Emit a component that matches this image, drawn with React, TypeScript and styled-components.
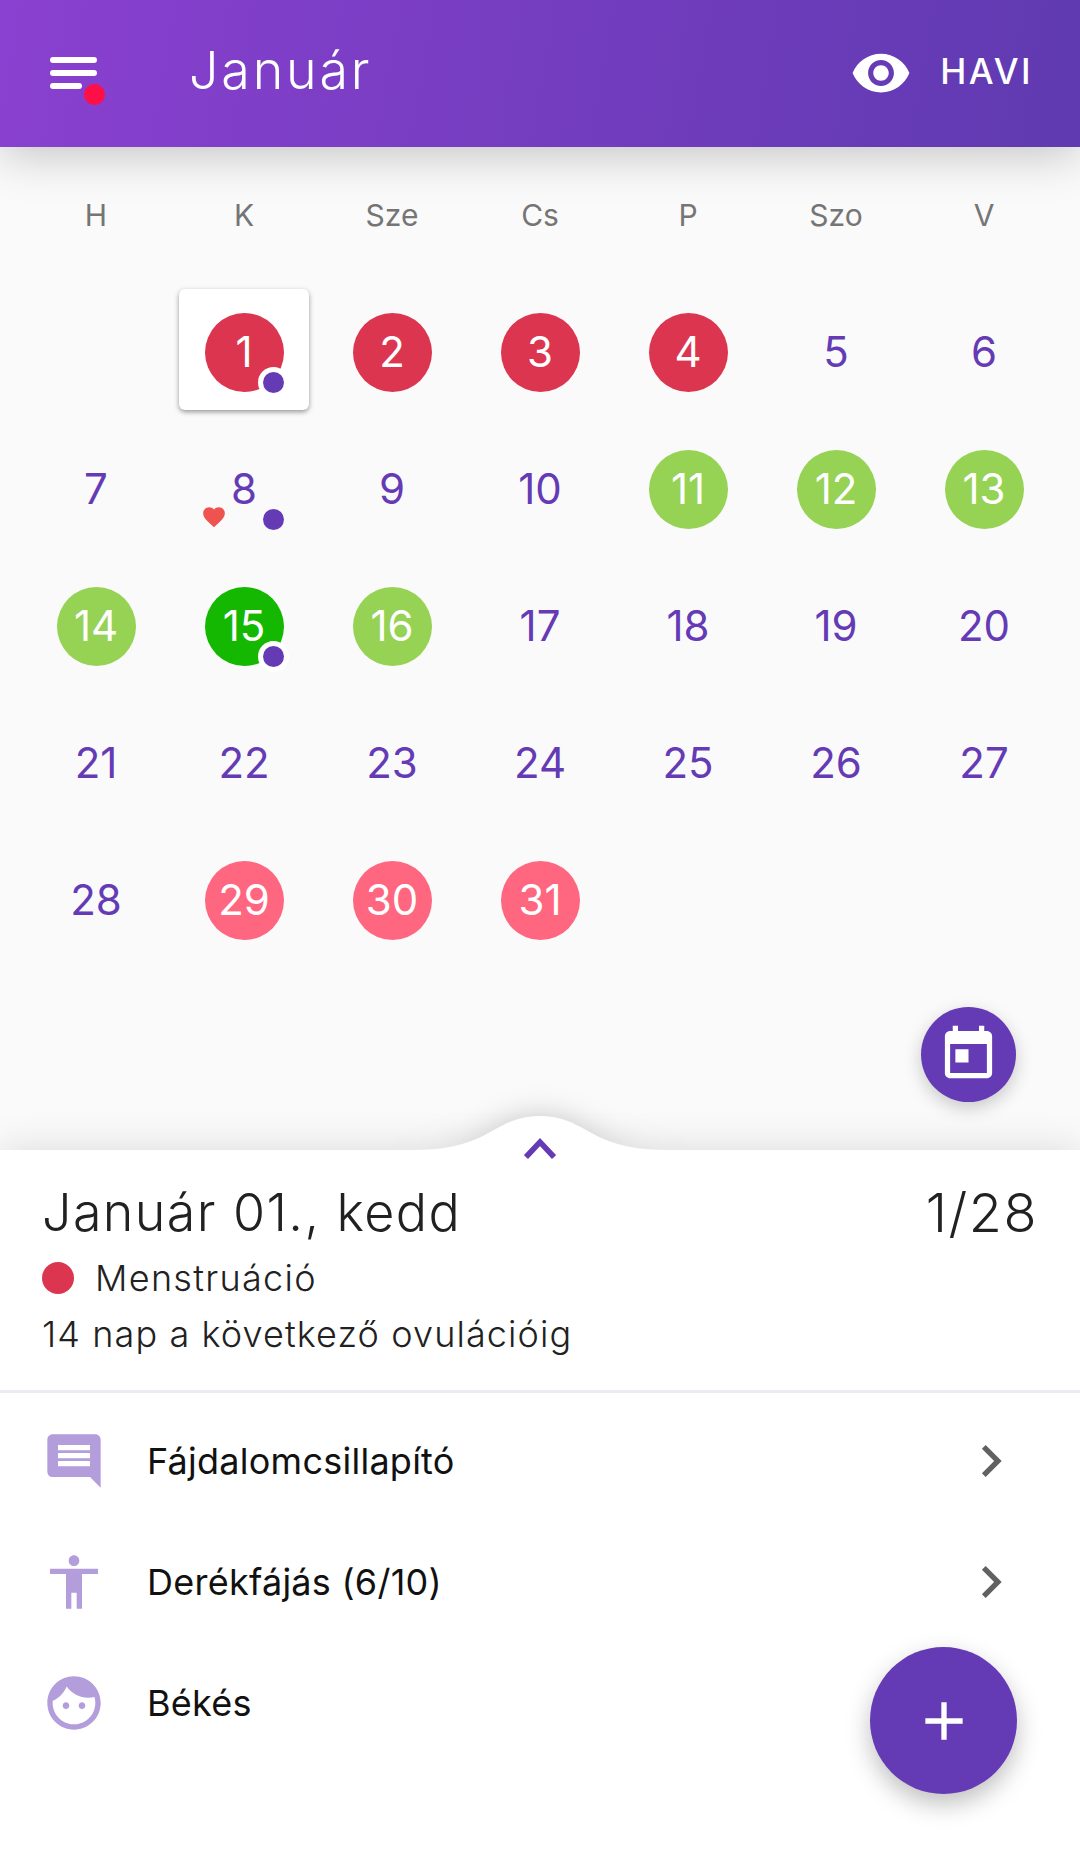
import React from 'react';
import styled, { createGlobalStyle } from 'styled-components';

const PURPLE = '#653bb5';
const FONT = "Inter, Roboto, 'Noto Sans', sans-serif";

const GlobalStyle = createGlobalStyle`
  html, body {
    margin: 0;
    padding: 0;
    background: #fafafa;
    font-family: ${FONT};
  }
`;

const Screen = styled.div`
  position: relative;
  width: 1080px;
  height: 1857px;
  display: flex;
  flex-direction: column;
  overflow: hidden;
  background: #fafafa;
`;

const Header = styled.header`
  position: relative;
  z-index: 2;
  flex: none;
  height: 147px;
  display: flex;
  align-items: center;
  padding: 0 50px 5px;
  box-sizing: border-box;
  background: linear-gradient(100deg, #8a40d0 0%, #5f3ab0 100%);
  box-shadow: 0 8px 44px rgba(0, 0, 0, 0.22);
  color: #fff;
`;

const MenuButton = styled.div`
  position: relative;
  flex: none;
  width: 47px;
  height: 32px;
  display: flex;
  flex-direction: column;
  justify-content: space-between;
  margin-right: 92px;
  margin-top: 4px;
`;

const MenuBar = styled.span<{ $short?: boolean }>`
  display: block;
  height: 6px;
  border-radius: 3px;
  background: #fff;
  width: ${(props) => (props.$short ? '32px' : '47px')};
`;

const MenuDot = styled.span`
  position: absolute;
  left: 34px;
  top: 27px;
  width: 21px;
  height: 21px;
  border-radius: 50%;
  background: #ff0f47;
`;

const Title = styled.h1`
  flex: 1;
  margin: 0;
  font-size: 52px;
  font-weight: 350;
  letter-spacing: 2.8px;
  line-height: 1;
`;

const ViewSwitch = styled.div`
  display: flex;
  align-items: center;
  gap: 28px;
  margin-right: -3px;
`;

const EyeIcon = styled.svg`
  width: 62px;
  height: 62px;
  margin-top: 3px;
  fill: #fff;
`;

const ViewLabel = styled.span`
  font-size: 35px;
  font-weight: 500;
  letter-spacing: 2.5px;
`;

const Weekdays = styled.div`
  flex: none;
  display: grid;
  grid-template-columns: repeat(7, 148px);
  padding: 50px 22px 0;
  height: 117px;
  box-sizing: border-box;
`;

const Weekday = styled.div`
  text-align: center;
  color: #757575;
  font-size: 30px;
  line-height: 36px;
`;

const Days = styled.div`
  flex: none;
  display: grid;
  grid-template-columns: repeat(7, 148px);
  grid-auto-rows: 137px;
  align-content: start;
  padding: 20px 22px 0;
  height: 886px;
  box-sizing: border-box;
`;

const DayCell = styled.div<{ $column?: number }>`
  position: relative;
  display: flex;
  align-items: center;
  justify-content: center;
  grid-column: ${(props) => props.$column || 'auto'};
`;

const SelectedCard = styled.span`
  position: absolute;
  left: 9px;
  top: 5px;
  width: 130px;
  height: 121px;
  border-radius: 6px;
  background: #fff;
  box-shadow: 0 2px 5px rgba(0, 0, 0, 0.4);
`;

const DayNumber = styled.span<{ $bg?: string }>`
  position: relative;
  width: 79px;
  height: 79px;
  padding-bottom: 2px;
  box-sizing: border-box;
  display: flex;
  align-items: center;
  justify-content: center;
  border-radius: 50%;
  font-size: 42px;
  font-weight: 400;
  background: ${(props) => props.$bg || 'transparent'};
  color: ${(props) => (props.$bg ? '#fff' : PURPLE)};
`;

const NoteDot = styled.span<{ $ring?: boolean }>`
  position: absolute;
  left: 93px;
  top: 87.5px;
  width: 21px;
  height: 21px;
  border-radius: 50%;
  background: ${PURPLE};
  box-shadow: ${(props) => (props.$ring ? '0 0 0 5px #fff' : 'none')};
`;

const HeartMark = styled.svg`
  position: absolute;
  left: 31px;
  top: 83px;
  width: 26px;
  height: 26px;
  fill: #ef5350;
`;

const CalendarFab = styled.div`
  position: absolute;
  z-index: 3;
  left: 921px;
  top: 1007px;
  width: 95px;
  height: 95px;
  display: flex;
  align-items: center;
  justify-content: center;
  border-radius: 50%;
  background: ${PURPLE};
  box-shadow: 0 6px 18px rgba(0, 0, 0, 0.2);
  svg {
    width: 63px;
    height: 63px;
    fill: #fff;
  }
`;

const Panel = styled.section`
  position: relative;
  flex: 1;
  background: #fff;
  box-shadow: 0 0 38px rgba(0, 0, 0, 0.13);
`;

const Bump = styled.svg`
  position: absolute;
  left: 400px;
  top: -34px;
  width: 280px;
  height: 35px;
  fill: #fff;
  filter: drop-shadow(0 -2px 14px rgba(0, 0, 0, 0.18));
`;

const BumpCover = styled.span`
  position: absolute;
  left: 0;
  right: 0;
  top: 0;
  height: 40px;
  background: #fff;
`;

const Chevron = styled.svg`
  position: absolute;
  left: 524px;
  top: -13px;
  width: 32px;
  height: 22px;
  fill: none;
  stroke: ${PURPLE};
  stroke-width: 5.5;
`;

const Summary = styled.div`
  position: relative;
  display: flex;
  flex-direction: column;
  height: 243px;
  box-sizing: border-box;
  padding: 32px 42px 0;
  border-bottom: 3px solid #ebebf3;
  color: #212121;
`;

const SummaryTop = styled.div`
  display: flex;
  justify-content: space-between;
  font-size: 52px;
  font-weight: 350;
  letter-spacing: 1.4px;
  line-height: 62px;
`;

const Fraction = styled.span`
  font-size: 54px;
  letter-spacing: 1.5px;
`;

const PhaseRow = styled.div`
  display: flex;
  align-items: center;
  gap: 21px;
  font-size: 36px;
  font-weight: 350;
  letter-spacing: 1.3px;
  line-height: 52px;
  margin-top: 8px;
`;

const PhaseDot = styled.span`
  width: 32px;
  height: 32px;
  border-radius: 50%;
  background: #dc3550;
`;

const SummaryNote = styled.div`
  font-size: 36px;
  font-weight: 350;
  letter-spacing: 1.1px;
  line-height: 52px;
  margin-top: 4px;
`;

const EntryList = styled.div`
  padding-top: 7px;
`;

const EntryRow = styled.div`
  display: flex;
  align-items: center;
  height: 121px;
  padding-left: 42px;
  padding-right: 57px;
  color: #111;
  font-size: 36px;
  font-weight: 380;
  letter-spacing: 0.25px;
`;

const EntryIcon = styled.svg`
  flex: none;
  width: 64px;
  height: 64px;
  margin-right: 41px;
  fill: #b39ddb;
`;

const EntryText = styled.span`
  flex: 1;
`;

const EntryArrow = styled.svg`
  flex: none;
  width: 64px;
  height: 64px;
  fill: #616161;
`;

const AddFab = styled.div`
  position: absolute;
  z-index: 3;
  left: 870px;
  top: 1647px;
  width: 147px;
  height: 147px;
  display: flex;
  align-items: center;
  justify-content: center;
  border-radius: 50%;
  background: ${PURPLE};
  box-shadow: 0 10px 24px rgba(0, 0, 0, 0.25);
  svg {
    width: 64px;
    height: 64px;
    fill: #fff;
  }
`;

const RED = '#dc3550';
const GREEN = '#96d254';
const PINK = '#ff6680';

const dayColors: Record<number, string> = {
  1: RED, 2: RED, 3: RED, 4: RED,
  11: GREEN, 12: GREEN, 13: GREEN, 14: GREEN, 15: '#14b800', 16: GREEN,
  29: PINK, 30: PINK, 31: PINK,
};

const weekdays = ['H', 'K', 'Sze', 'Cs', 'P', 'Szo', 'V'];
const days = Array.from({ length: 31 }, (_, i) => i + 1);

const entries = [
  {
    label: 'Fájdalomcsillapító',
    arrow: true,
    icon: 'M21.99 4c0-1.1-.89-2-1.99-2H4c-1.1 0-2 .9-2 2v12c0 1.1.9 2 2 2h14l4 4-.01-18zM18 14H6v-2h12v2zm0-3H6V9h12v2zm0-3H6V6h12v2z',
  },
  {
    label: 'Derékfájás (6/10)',
    arrow: true,
    icon: 'M12 2c1.1 0 2 .9 2 2s-.9 2-2 2-2-.9-2-2 .9-2 2-2zm9 7h-6v13h-2v-6h-2v6H9V9H3V7h18v2z',
  },
  {
    label: 'Békés',
    arrow: false,
    icon: 'M9 11.75c-.69 0-1.25.56-1.25 1.25s.56 1.25 1.25 1.25 1.25-.56 1.25-1.25-.56-1.25-1.25-1.25zm6 0c-.69 0-1.25.56-1.25 1.25s.56 1.25 1.25 1.25 1.25-.56 1.25-1.25-.56-1.25-1.25-1.25zM12 2C6.48 2 2 6.48 2 12s4.48 10 10 10 10-4.48 10-10S17.52 2 12 2zm0 18c-4.41 0-8-3.59-8-8 0-.29.02-.58.05-.86 2.36-1.05 4.23-2.98 5.21-5.37C11.07 8.33 14.05 10 17.42 10c.78 0 1.53-.09 2.25-.26.21.71.33 1.47.33 2.26 0 4.41-3.59 8-8 8z',
  },
];

export default function App() {
  return (
    <Screen>
      <GlobalStyle />
      <Header>
        <MenuButton>
          <MenuBar />
          <MenuBar />
          <MenuBar $short />
          <MenuDot />
        </MenuButton>
        <Title>Január</Title>
        <ViewSwitch>
          <EyeIcon viewBox="0 0 24 24">
            <path d="M12 4.5C7 4.5 2.73 7.61 1 12c1.73 4.39 6 7.5 11 7.5s9.27-3.11 11-7.5c-1.73-4.39-6-7.5-11-7.5zM12 17c-2.76 0-5-2.24-5-5s2.24-5 5-5 5 2.24 5 5-2.24 5-5 5zm0-8c-1.66 0-3 1.34-3 3s1.34 3 3 3 3-1.34 3-3-1.34-3-3-3z" />
          </EyeIcon>
          <ViewLabel>HAVI</ViewLabel>
        </ViewSwitch>
      </Header>

      <Weekdays>
        {weekdays.map((d) => (
          <Weekday key={d}>{d}</Weekday>
        ))}
      </Weekdays>

      <Days>
        {days.map((d) => (
          <DayCell key={d} $column={d === 1 ? 2 : undefined}>
            {d === 1 && <SelectedCard />}
            <DayNumber $bg={dayColors[d]}>{d}</DayNumber>
            {d === 8 && (
              <HeartMark viewBox="0 0 24 24">
                <path d="M12 21.35l-1.45-1.32C5.4 15.36 2 12.28 2 8.5 2 5.42 4.42 3 7.5 3c1.74 0 3.41.81 4.5 2.09C13.09 3.81 14.76 3 16.5 3 19.58 3 22 5.42 22 8.5c0 3.78-3.4 6.86-8.55 11.54L12 21.35z" />
              </HeartMark>
            )}
            {(d === 1 || d === 8 || d === 15) && <NoteDot $ring={d !== 8} />}
          </DayCell>
        ))}
      </Days>

      <CalendarFab>
        <svg viewBox="0 0 24 24">
          <path d="M19 3h-1V1h-2v2H8V1H6v2H5c-1.11 0-1.99.9-1.99 2L3 19c0 1.1.89 2 2 2h14c1.1 0 2-.9 2-2V5c0-1.1-.9-2-2-2zm0 16H5V8h14v11zM7 10h5v5H7z" />
        </svg>
      </CalendarFab>

      <Panel>
        <Bump viewBox="0 0 280 35">
          <path d="M0 34C36 34 50 33 74 24C96 15 110 0 140 0C170 0 184 15 206 24C230 33 244 34 280 34V35H0Z" />
        </Bump>
        <BumpCover />
        <Chevron viewBox="0 0 32 22">
          <path d="M2 20L16 5L30 20" />
        </Chevron>
        <Summary>
          <SummaryTop>
            <span>Január 01., kedd</span>
            <Fraction>1/28</Fraction>
          </SummaryTop>
          <PhaseRow>
            <PhaseDot />
            Menstruáció
          </PhaseRow>
          <SummaryNote>14 nap a következő ovulációig</SummaryNote>
        </Summary>
        <EntryList>
          {entries.map((e) => (
            <EntryRow key={e.label}>
              <EntryIcon viewBox="0 0 24 24">
                <path d={e.icon} />
              </EntryIcon>
              <EntryText>{e.label}</EntryText>
              {e.arrow && (
                <EntryArrow viewBox="0 0 24 24">
                  <path d="M10 6L8.59 7.41 13.17 12l-4.58 4.59L10 18l6-6z" />
                </EntryArrow>
              )}
            </EntryRow>
          ))}
        </EntryList>
      </Panel>

      <AddFab>
        <svg viewBox="0 0 24 24">
          <path d="M19 13h-6v6h-2v-6H5v-2h6V5h2v6h6v2z" />
        </svg>
      </AddFab>
    </Screen>
  );
}
